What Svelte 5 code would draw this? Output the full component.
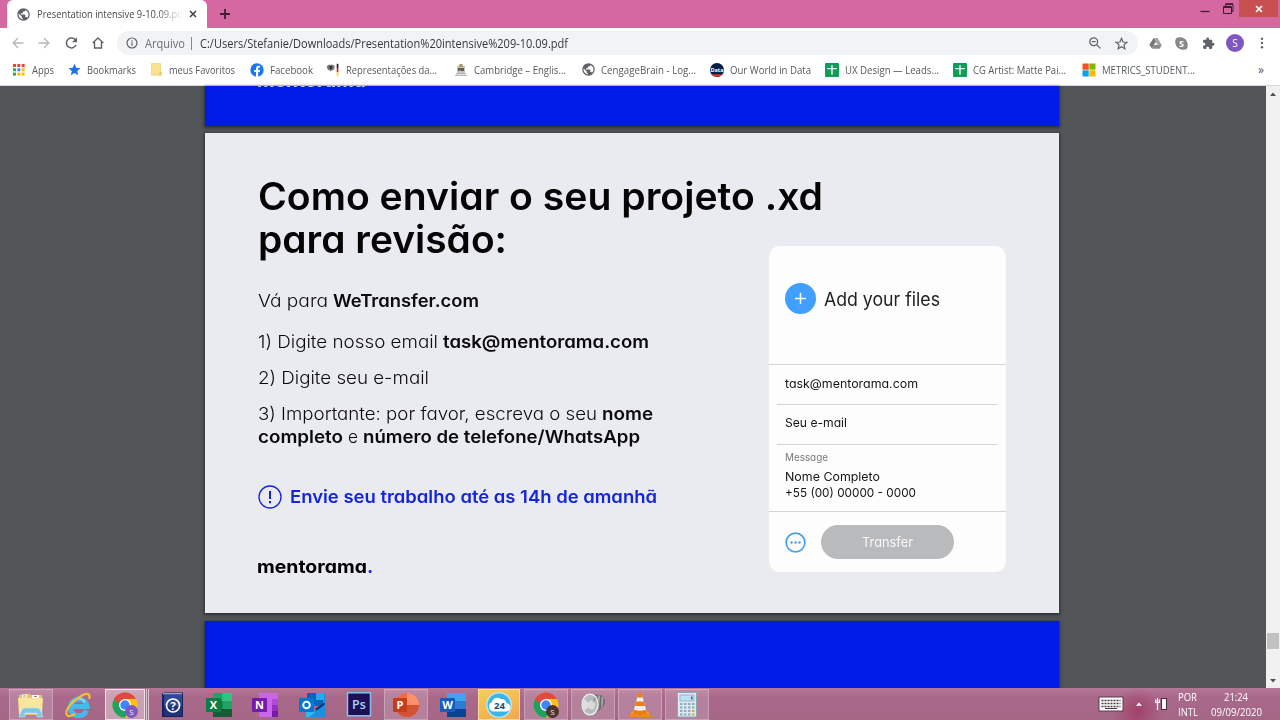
<script>
  // Stretches or narrows a label so that it fills a given width.
  function fit(node, width) {
    node.style.display = 'inline-block';
    const natural = node.getBoundingClientRect().width;
    node.style.width = `${width}px`;
    node.style.transformOrigin = '0 50%';
    node.style.transform = `scaleX(${width / natural})`;
  }

  const bookmarks = [
    { icon: 'apps', label: 'Apps', w: 56, t: 22 },
    { icon: 'star', label: 'Bookmarks', w: 82, t: 49 },
    { icon: 'folder', label: 'meus Favoritos', w: 100, t: 66 },
    { icon: 'facebook', label: 'Facebook', w: 76, t: 43 },
    { icon: 'germany', label: 'Representações da...', w: 128, t: 91 },
    { icon: 'cambridge', label: 'Cambridge – Englis...', w: 128, t: 92 },
    { icon: 'globe', label: 'CengageBrain - Log...', w: 128, t: 95 },
    { icon: 'data', label: 'Our World in Data', w: 115, t: 81 },
    { icon: 'sheet', label: 'UX Design — Leads...', w: 128, t: 94 },
    { icon: 'sheet', label: 'CG Artist: Matte Pai...', w: 128.500, t: 93 },
    { icon: 'microsoft', label: 'METRICS_STUDENT...', w: 130, t: 93 }
  ];

  const tasks = [
    { icon: 'explorer', open: true },
    { icon: 'ie' },
    { icon: 'chrome', open: true, stacked: true, badge: '#7e57c2' },
    { icon: 'help' },
    { icon: 'excel' },
    { icon: 'onenote' },
    { icon: 'outlook' },
    { icon: 'photoshop' },
    { icon: 'powerpoint', open: true },
    { icon: 'word' },
    { icon: 'cloud', open: true, alert: true },
    { icon: 'chrome', open: true, badge: '#4e342e' },
    { icon: 'speaker', open: true },
    { icon: 'vlc', open: true },
    { icon: 'calc', open: true }
  ];
  const appColors = ['#ea4335', '#ea4335', '#ea4335', '#34a853', '#4285f4', '#fbbc04', '#34a853', '#fbbc04', '#fbbc04'];
</script>

{#snippet globe()}
  <svg width="13" height="13" viewBox="1.5 1.5 21 21"><path fill="#5f6368" d="M12 2C6.480 2 2 6.480 2 12s4.480 10 10 10 10-4.480 10-10S17.520 2 12 2zm-1 17.930c-3.950-.49-7-3.850-7-7.930 0-.62.08-1.210.21-1.790L9 15v1c0 1.100.9 2 2 2v1.930zm6.900-2.540c-.26-.81-1-1.390-1.900-1.390h-1v-3c0-.55-.45-1-1-1H8v-2h2c.55 0 1-.45 1-1V7h2c1.100 0 2-.9 2-2v-.41c2.930 1.190 5 4.060 5 7.410 0 2.080-.8 3.970-2.100 5.390z" /></svg>
{/snippet}

{#snippet mark(kind)}
  {#if kind === 'apps'}
    <svg width="14" height="14" viewBox="0 0 14 14">
      {#each appColors as c, i}<rect x={1 + (i % 3) * 4.3} y={1 + Math.floor(i / 3) * 4.3} width="3" height="3" fill={c} />{/each}
    </svg>
  {:else if kind === 'star'}
    <svg width="13" height="13" viewBox="0 0 24 24"><path fill="#1a73e8" d="M12 1.500l3.100 7.300 8 .7-6.100 5.200 1.900 7.800-6.900-4.200-6.900 4.200L7 14.700.9 9.500l8-.7z" /></svg>
  {:else if kind === 'folder'}
    <svg width="13" height="13" viewBox="0 0 13 13"><path fill="#fbe28e" stroke="#f0cd68" stroke-width=".6" d="M1.500.5h9v8.500h.8V12.300H1.500z" /><path fill="#efc95c" d="M9.500 9h1.800v3.300H8.800z" /></svg>
  {:else if kind === 'facebook'}
    <svg width="14" height="14" viewBox="0 0 14 14"><circle cx="7" cy="7" r="6.700" fill="#1877f2" /><path fill="#fff" d="M6 14V8.900H4.200V7H6V5.500C6 3.700 7 2.700 8.700 2.700l1.400.1v1.700h-.9c-.8 0-1 .5-1 1V7h1.900l-.3 1.900H8.200V14z" /></svg>
  {:else if kind === 'germany'}
    <svg width="14" height="14" viewBox="0 0 14 14"><path fill="#777" d="M1.500 2.300L4 1.500l.8.600.8-.6 2.500.8.700 2.200L7.500 7 5.500 7.600l-.7.8-.7-.8L2.100 7 .8 4.500z" /><path fill="#333" d="M3.500 3h2.600v2.500l-1.300 1-1.300-1z" /><path fill="#222" d="M10.700.8h1.700V5h-1.700z" /><path fill="#d22" d="M10.700 5h1.700v4.300h-1.700z" /><path fill="#ffd83a" d="M10.700 9.300h1.700v4h-1.700z" /></svg>
  {:else if kind === 'cambridge'}
    <svg width="14" height="14" viewBox="0 0 14 14"><path fill="#bfc4bd" d="M3 3h8v7H3z" /><path fill="#a99768" d="M5.500 1h3l.5 3H5z" /><path fill="#55604f" d="M4 5h6v3H4z" /><path fill="#d5654d" d="M5 6.500h2v1.500H5z" /><path fill="#b9bbb8" d="M2 10h10v1.500H2zM1 12h12v1H1z" /></svg>
  {:else if kind === 'globe'}
    {@render globe()}
  {:else if kind === 'data'}
    <svg width="14" height="14" viewBox="0 0 14 14"><circle cx="7" cy="7" r="7" fill="#002147" /><path fill="#dc3522" d="M1.400 11.200h11.200A7 7 0 0 1 1.400 11.200z" /><text x="7" y="9" fill="#fff" font-size="5.500" font-weight="700" text-anchor="middle">Data</text></svg>
  {:else if kind === 'sheet'}
    <svg width="14" height="14" viewBox="0 0 14 14"><rect width="14" height="14" rx="1" fill="#0f9d58" /><path stroke="#fff" stroke-width="1.300" d="M7 2.300v9.500M2.300 5.600h9.400" /></svg>
  {:else}
    <svg width="14" height="14" viewBox="0 0 14 14"><path fill="#f25022" d="M.5.500h6.200v6.200H.5z" /><path fill="#7fba00" d="M7.300.500h6.200v6.200H7.300z" /><path fill="#00a4ef" d="M.5 7.300h6.200v6.200H.5z" /><path fill="#ffb900" d="M7.300 7.300h6.200v6.200H7.300z" /></svg>
  {/if}
{/snippet}

{#snippet office(letter, dark, a, b, c)}
  <path fill={a} d="M7 1h19v8H7z" /><path fill={b} d="M7 9h19v8H7z" /><path fill={c} d="M7 17h19v8H7z" />
  {#if letter === 'X'}<path fill="#33c481" d="M16.500 1H26v8h-9.500z" /><path fill="#21a366" d="M16.500 9H26v8h-9.500z" />{/if}
  <rect y="6" width="15" height="14" rx="1" fill={dark} />
  <text x="7.500" y="17" fill="#fff" font-size="11" font-weight="700" text-anchor="middle">{letter}</text>
{/snippet}

{#snippet app(task)}
  <svg width="26" height="26" viewBox="0 0 26 26">
    {#if task.icon === 'explorer'}
      <path fill="#e5c768" d="M1 3l10-1.500 2 1.500h11v20H1z" />
      <path fill="#fff" d="M4 2.500h5v3H4zM14 3h7v3h-7z" /><path fill="#6ca85c" d="M5 3.500h3v1H5z" /><path fill="#d66b52" d="M16 4h3v1h-3z" />
      <path fill="#f9e59b" d="M0 6h25l-1 16H1z" />
      <path fill="#7fc7e4" stroke="#b9e5f2" stroke-width=".7" d="M4 17.500q1-1.500 3-1.500h12q2 0 3 1.500l3 7.500h-6v-4H7v4H1z" />
    {:else if task.icon === 'ie'}
      <path fill="none" stroke="#49b8e9" stroke-width="5" d="M21.500 18.500A8.300 8.300 0 1 1 22 14.500H7" />
      <path fill="none" stroke="#a5e9fb" stroke-width="1.300" d="M6 12a8 8 0 0 1 14-2" />
      <path fill="none" stroke="#f4bd36" stroke-width="2.200" d="M24 7c2-5-2-7-8-3C7 9-1 19 2 23c1 2 5 1 8-1" />
    {:else if task.icon === 'chrome'}
      <circle cx="13" cy="13" r="12.500" fill="#fbc116" />
      <path fill="#dd4b3e" d="M13 13L2.200 6.700A12.500 12.500 0 0 1 23.800 6.700H13z" />
      <path fill="#1da261" d="M13 13l5.500 3.200L13 25.500A12.500 12.500 0 0 1 2.200 6.700z" />
      <path fill="#dd4b3e" d="M13 6.700h10.800A12.500 12.500 0 0 0 2.200 6.700L5 11z" />
      <circle cx="13" cy="13" r="6" fill="#fff" /><circle cx="13" cy="13" r="4.700" fill="#4285f4" />
      <circle cx="19.500" cy="19.500" r="6.500" fill={task.badge} />
      <text x="19.500" y="22.500" fill="#eee" font-size="8" text-anchor="middle">S</text>
    {:else if task.icon === 'help'}
      <path fill="#172357" d="M3 2l2-1.500h19V25H3z" /><path fill="#8ba0d4" d="M4 1h19v1.500H4z" /><path fill="#304898" d="M5 3h18v21H5z" /><path fill="#20327a" d="M5 14h18v10H5z" />
      <circle cx="14" cy="13.500" r="6.500" fill="none" stroke="#fff" stroke-width="1.700" />
      <text x="14" y="17.500" fill="#fff" font-size="11" font-weight="700" text-anchor="middle">?</text>
    {:else if task.icon === 'excel'}
      {@render office('X', '#107c41', '#21a366', '#107c41', '#185c37')}
    {:else if task.icon === 'onenote'}
      {@render office('N', '#7719aa', '#ca64ea', '#ca64ea', '#ca64ea')}
      <path fill="#ae4bd5" d="M20 7h6v6h-6z" /><path fill="#9332bf" d="M20 13h6v6h-6z" /><path fill="#7719aa" d="M20 19h6v6h-6z" />
    {:else if task.icon === 'outlook'}
      <path fill="#1490df" d="M8 1h18v12H8z" /><path fill="#0364b8" d="M8 1h9v7H8z" /><path fill="#28a8ea" d="M17 1h8v7h-8z" /><path fill="#0364b8" d="M15 8h9v6h-9z" />
      <path fill="#35b8f1" d="M7 13l19 12H7z" /><path fill="#1478c8" d="M26 12v13l-11-6z" /><path fill="#0a2767" d="M25 11l1 1-8 6-2-1z" /><path fill="#1a91df" d="M26 13v12H10z" />
      <rect y="6" width="15" height="14" rx="1" fill="#0078d4" /><circle cx="7.500" cy="13" r="3.300" fill="none" stroke="#fff" stroke-width="2" />
    {:else if task.icon === 'photoshop'}
      <rect x="1.500" y=".8" width="23" height="23" fill="#1d1055" stroke="#8bbef0" stroke-width="1.500" />
      <text x="13" y="17" fill="#a8d5ff" font-size="12.500" font-weight="600" text-anchor="middle">Ps</text>
    {:else if task.icon === 'powerpoint'}
      <circle cx="14" cy="13" r="12" fill="#ed6c47" /><path fill="#ff8f6b" d="M14 1a12 12 0 0 1 12 12H14z" /><path fill="#d35230" d="M2 13h24a12 12 0 0 1-24 0z" />
      <rect y="6" width="14" height="14" rx="1" fill="#c43e1c" /><text x="7" y="17" fill="#fff" font-size="11" font-weight="700" text-anchor="middle">P</text>
    {:else if task.icon === 'word'}
      {@render office('W', '#185abd', '#41a5ee', '#2b7cd3', '#103f91')}
    {:else if task.icon === 'cloud'}
      <circle cx="13" cy="13" r="13" fill="#b8e5f6" /><circle cx="13" cy="13" r="11.500" fill="#39b6e8" />
      <path fill="#fff" d="M7 19.500a5 5 0 0 1-1-9.500A5.500 5.500 0 0 1 15 7a5.500 5.500 0 0 1 5.500 4 4.300 4.300 0 0 1 0 8.500z" />
      <text x="13.500" y="16.800" fill="#234d78" font-size="9.500" font-weight="700" text-anchor="middle">24</text>
    {:else if task.icon === 'speaker'}
      <path fill="#6b6b6b" d="M13 2l9 1.500 3 4-1 6-9 9z" /><path fill="#aaa" d="M18 3l2 1-1 12-2 2zM21.500 4l2 2-1 8-1.500 2z" />
      <ellipse cx="10" cy="12.500" rx="9" ry="11.500" fill="#ececec" stroke="#888" stroke-width=".7" /><ellipse cx="10" cy="12.500" rx="7.300" ry="9.700" fill="#b7babb" />
      <path fill="#dedede" d="M4 7l7 6-7 6q-2-6 0-12z" /><ellipse cx="11.500" cy="13" rx="3.500" ry="4.500" fill="#d7d9da" /><path fill="#8f9394" d="M14 4.500l2 3-3 3z" />
    {:else if task.icon === 'vlc'}
      <path fill="#f08a17" d="M4.500 20h17l3 5h-23z" /><path fill="#f7a83d" d="M4.500 20h17l1 1.500H3.500z" /><path fill="#eee" d="M11.500 1h3l5.500 20q-7 4-14 0z" />
      <path fill="#ee7c12" d="M11.500 1q1.500-1.500 3 0l1.200 4.500h-5.400zM9.200 9.500h7.600l1.200 4.500H8zM7 17.500q6 2.500 12 0l1.300 4q-7.300 3-14.600 0z" />
    {:else}
      <rect x="3.500" y=".5" width="19" height="24.500" rx="1" fill="#dce9ef" stroke="#86a9ba" /><path fill="#bde0f3" stroke="#7d9db0" stroke-width=".6" d="M6 3h14v6H6z" /><path fill="#3d6784" d="M17 4.500h1.500v3H17z" />
      {#each [11.5, 15, 18.5, 22] as y}{#each [6, 10, 14, 18] as x}<rect {x} y={y - 0.5} width="2.500" height="2" fill={x === 18 && y > 16 ? '#e0a64e' : '#8eacbd'} />{/each}{/each}
    {/if}
  </svg>
{/snippet}

<div class="screen">
  <header class="tabs">
    <div class="tab">
      {@render globe()}
      <span class="tab-name"><span use:fit={146}>Presentation intensive 9-10.09.pd</span></span>
      <svg width="8" height="8" viewBox="0 0 8 8"><path stroke="#3c4043" stroke-width="1.500" d="M1 1l6 6M7 1L1 7" /></svg>
    </div>
    <svg class="new" width="12" height="12" viewBox="0 0 12 12"><path stroke="#3a2030" stroke-width="1.800" d="M6 1v10M1 6h10" /></svg>
    <div class="window">
      <svg width="10" height="12" viewBox="0 0 10 12"><path stroke="#3a1f30" stroke-width="1.300" d="M.5 10.500h9" /></svg>
      <svg width="11" height="11" viewBox="0 0 11 11"><path fill="none" stroke="#3a1f30" d="M.5 3.500h8v7h-8zM.5 4.500h8M2.500 3V1.500H10v7H8.500M2.500.7H10" /></svg>
      <div class="close"><svg width="8" height="8" viewBox="0 0 8 8"><path stroke="#fff" stroke-width="1.700" d="M1 1l6 6M7 1L1 7" /></svg></div>
    </div>
  </header>

  <nav class="toolbar">
    <div class="nav">
      <svg width="12" height="12" viewBox="0 0 12 12"><path fill="none" stroke="#b4b6b9" stroke-width="1.300" d="M11.500 6H1.500M6 1L1.200 6 6 11" /></svg>
      <svg width="12" height="12" viewBox="0 0 12 12"><path fill="none" stroke="#b4b6b9" stroke-width="1.300" d="M.5 6h10M6 1l4.800 5L6 11" /></svg>
      <svg width="13" height="12" viewBox="0 0 13 12"><path fill="none" stroke="#5f6368" stroke-width="1.500" d="M10.800 3.500A5 5 0 1 0 11 8" /><path fill="#5f6368" d="M12 .3v5H7z" /></svg>
      <svg width="12" height="12" viewBox="0 0 12 12"><path fill="none" stroke="#5f6368" stroke-width="1.400" d="M.7 6L6 1l5.300 5M2.500 5v6h7V5" /></svg>
    </div>
    <div class="address">
      <svg width="12" height="12" viewBox="0 0 12 12"><circle cx="6" cy="6" r="5" fill="none" stroke="#5f6368" stroke-width="1.200" /><path stroke="#5f6368" stroke-width="1.200" d="M6 5.300v3.400M6 3.200v1.200" /></svg>
      <span class="scheme" use:fit={40}>Arquivo</span>
      <i></i>
      <span class="url" use:fit={368}>C:/Users/Stefanie/Downloads/Presentation%20intensive%209-10.09.pdf</span>
      <svg class="zoom" width="12" height="12" viewBox="0 0 12 12"><circle cx="4.700" cy="4.700" r="3.900" fill="none" stroke="#5f6368" stroke-width="1.300" /><path stroke="#5f6368" stroke-width="1.300" d="M2.800 4.700h3.800M7.600 7.600l3.800 3.800" /></svg>
      <svg width="13" height="13" viewBox="0 0 24 24"><path fill="none" stroke="#5f6368" stroke-width="2.200" d="M12 2.500l2.800 6.700 7.200.6-5.500 4.700 1.700 7-6.200-3.700-6.200 3.700 1.700-7L2 9.800l7.200-.6z" /></svg>
    </div>
    <div class="extensions">
      <svg width="13" height="13" viewBox="0 0 13 13"><path fill="#777" d="M4.600 1h2.700L7 4.500 3 11.500.3 7.800z" /><path fill="#a4a4a4" d="M4.600 1h4l4.100 7H8.500z" /><path fill="#8b8b8b" d="M5 8h7.700l-2 3.700H3z" /><path fill="#eee" d="M6.600 5.200L8.200 8H5z" /></svg>
      <svg width="13" height="13" viewBox="0 0 13 13"><rect x=".3" y=".3" width="9" height="9" rx="4" fill="#888" /><rect x="3.700" y="3.700" width="9" height="9" rx="4" fill="#888" /><circle cx="6.500" cy="6.500" r="5.700" fill="#888" /><text x="6.500" y="9.800" fill="#fff" font-size="9" font-weight="700" text-anchor="middle">S</text></svg>
      <svg width="13" height="13" viewBox="0 0 24 24"><path fill="#5f6368" d="M20.500 11H19V7a2 2 0 0 0-2-2h-4V3.500a2.500 2.500 0 0 0-5 0V5H4a2 2 0 0 0-2 2v3.800h1.500a2.700 2.700 0 0 1 0 5.400H2V20a2 2 0 0 0 2 2h3.800v-1.500a2.700 2.700 0 0 1 5.400 0V22H17a2 2 0 0 0 2-2v-4h1.500a2.500 2.500 0 0 0 0-5z" /></svg>
      <b>S</b>
      <svg width="4" height="12" viewBox="0 0 4 12"><g fill="#5f6368"><circle cx="2" cy="1.700" r="1.200" /><circle cx="2" cy="6" r="1.200" /><circle cx="2" cy="10.300" r="1.200" /></g></svg>
    </div>
  </nav>

  <div class="bookmarks">
    {#each bookmarks as b}
      <div class="bookmark" style:width="{b.w}px">{@render mark(b.icon)}<span use:fit={b.t}>{b.label}</span></div>
    {/each}
    <span class="more">»</span>
  </div>

  <main class="viewer">
    <div class="pages">
      <section class="page first"><div class="ghost"><span use:fit={109}>mentorama</span></div></section>
      <section class="page slide">
        <div class="copy">
          <h1><span use:fit={565}>Como enviar o seu projeto .xd</span><br /><span use:fit={249}>para revisão:</span></h1>
          <p class="go"><span use:fit={70}>Vá para</span><b use:fit={146}>WeTransfer.com</b></p>
          <p class="one"><span use:fit={180}>1) Digite nosso email</span><b use:fit={206}>task@mentorama.com</b></p>
          <p class="two"><span use:fit={171}>2) Digite seu e-mail</span></p>
          <p class="three"><span use:fit={339}>3) Importante: por favor, escreva o seu</span><b use:fit={51}>nome</b></p>
          <p><b use:fit={85}>completo</b><span use:fit={10}>e</span><b use:fit={277}>número de telefone/WhatsApp</b></p>
          <p class="deadline">
            <svg width="24" height="24" viewBox="0 0 24 24"><circle cx="12" cy="12" r="11" fill="none" stroke="#1526d8" stroke-width="1.300" /><path stroke="#1526d8" stroke-width="2" d="M12 6v8M12 16v2.200" /></svg>
            <b use:fit={367}>Envie seu trabalho até as 14h de amanhã</b>
          </p>
          <div class="brand"><span use:fit={110}>mentorama</span><em>.</em></div>
        </div>
        <aside class="card">
          <div class="add">
            <svg width="31" height="31" viewBox="0 0 31 31"><circle cx="15.500" cy="15.500" r="15.500" fill="#409fff" /><path stroke="#fff" stroke-width="1.500" d="M15.500 10v11M10 15.500h11" /></svg>
            <span use:fit={116}>Add your files</span>
          </div>
          <div class="field"><span use:fit={133}>task@mentorama.com</span></div>
          <div class="field mail"><span use:fit={62}>Seu e-mail</span></div>
          <div class="message">
            <small><span use:fit={43}>Message</span></small>
            <div><span use:fit={95}>Nome Completo</span></div>
            <div><span use:fit={131}>+55 (00) 00000 - 0000</span></div>
          </div>
          <div class="actions">
            <svg width="21" height="21" viewBox="0 0 21 21"><circle cx="10.500" cy="10.500" r="9.400" fill="none" stroke="#499fef" stroke-width="1.700" /><g fill="#499fef"><circle cx="6.500" cy="10.500" r="1.200" /><circle cx="10.500" cy="10.500" r="1.200" /><circle cx="14.500" cy="10.500" r="1.200" /></g></svg>
            <button><span use:fit={51}>Transfer</span></button>
          </div>
        </aside>
      </section>
      <section class="page last"></section>
    </div>
    <div class="scroll">
      <svg width="6" height="4" viewBox="0 0 6 4"><path fill="#505050" d="M0 4l3-3.500L6 4z" /></svg>
      <div class="thumb"></div>
      <svg width="6" height="4" viewBox="0 0 6 4"><path fill="#505050" d="M0 0l3 3.500L6 0z" /></svg>
    </div>
  </main>

  <footer class="taskbar">
    <div class="tasks">
      {#each tasks as task}
        <div class="slot"><div class="task" class:open={task.open} class:stacked={task.stacked} class:alert={task.alert}>{@render app(task)}</div></div>
      {/each}
    </div>
    <div class="tray">
      <svg width="26" height="16" viewBox="0 0 26 16"><rect x="1" y="1" width="24" height="14" fill="#fff" stroke="#5c3b4e" /><path stroke="#4b3641" stroke-width="1.300" stroke-dasharray="2 1" d="M3.500 4.500h19M3.500 7.500h19M3.500 10.500h19" /><path stroke="#4b3641" d="M7 12.500h12" /></svg>
      <svg width="6" height="4" viewBox="0 0 6 4"><path fill="#fff" d="M0 3.700L3 .5l3 3.200z" /></svg>
      <svg width="13" height="14" viewBox="0 0 13 14"><rect x="6.500" y="1.500" width="5" height="11" fill="#f5eaf0" stroke="#4b2d3d" /><rect x="7.500" y="2.500" width="3" height="9" fill="#fff" /><path stroke="#fff" stroke-width="1.200" d="M2.500 1v12M.7 2.500v3h3.600v-3" fill="none" /></svg>
      <div class="lang"><span use:fit={19}>POR</span><span use:fit={20}>INTL</span></div>
      <div class="clock"><span use:fit={24}>21:24</span><span use:fit={51}>09/09/2020</span></div>
    </div>
  </footer>
</div>

<style>
  :global(body) { margin: 0; overflow: hidden; }
  .screen { width: 1280px; height: 720px; display: flex; flex-direction: column; overflow: hidden; font-family: "Open Sans", "Noto Sans", sans-serif; background: #fff; }
  span, b { white-space: nowrap; }
  svg { display: block; flex: none; }

  .tabs { height: 28px; flex: none; background: #d568a1; display: flex; }
  .tab { box-sizing: border-box; width: 200px; margin-left: 7px; padding-left: 10px; background: #fff; border-radius: 6px 6px 0 0; display: flex; align-items: center; }
  .tab-name { width: 146px; margin: 0 6px 0 7px; overflow: hidden; font-size: 10.500px; color: #45494d; mask-image: linear-gradient(90deg, #000 120px, transparent 146px); }
  .new { margin: 8px 0 0 12px; }
  .window { margin-left: auto; padding-right: 2px; display: flex; align-items: flex-start; }
  .window > svg:first-child { margin: 1px 13px 0 0; }
  .window > svg:nth-child(2) { margin: 3px 5px 0 0; }
  .close { width: 39px; height: 17px; background: #c75050; display: grid; place-items: center; }

  .toolbar { height: 30px; flex: none; display: flex; align-items: center; }
  .nav { width: 92px; margin-left: 12px; display: flex; justify-content: space-between; }
  .address { box-sizing: border-box; width: 1021px; height: 24px; margin-left: 13px; padding: 0 10px 0 9px; border-radius: 12px; background: #f1f3f4; display: flex; align-items: center; font-size: 11.800px; }
  .scheme { flex: none; margin-left: 7px; color: #6b6f73; }
  .address i { width: 1px; height: 13px; margin: 0 8px 0 6px; background: #85898d; }
  .url { flex: none; color: #35383b; }
  .zoom { margin: 0 14px 0 auto; }
  .extensions { flex: 1; padding-left: 10.500px; display: flex; align-items: center; gap: 13.500px; }
  .extensions b { width: 18px; height: 18px; margin: 0 2px 0 -2px; border-radius: 50%; background: #7e57c2; color: #fff; font-size: 10px; font-weight: 400; line-height: 18px; text-align: center; }

  .bookmarks { box-sizing: border-box; height: 28px; flex: none; padding: 0 16px 4px 12px; border-bottom: 1px solid #d5d7da; display: flex; align-items: center; font-size: 10.500px; color: #55595d; }
  .bookmark { flex: none; display: flex; align-items: center; gap: 6px; }
  .more { margin-left: auto; font-size: 12px; }

  .viewer { height: 602px; flex: none; background: #525659; display: flex; justify-content: space-between; }
  .pages { width: 854px; margin-left: 205px; display: flex; flex-direction: column; gap: 7px; }
  .page { box-sizing: border-box; flex: none; box-shadow: 0 1px 3px 1px rgba(0, 0, 0, .45); }
  .first { height: 40px; background: #001ae8; overflow: hidden; }
  .ghost { margin: -15px 0 0 52px; font: 700 18px/20px Inter, sans-serif; font-feature-settings: "cv11"; color: #c5ccff; }
  .last { height: 67.500px; margin-top: .5px; background: #001ae8; }
  .slide { height: 480px; padding: 42px 53px 0 53px; background: #eaebf0; display: flex; justify-content: space-between; font-family: Inter, "Open Sans", sans-serif; font-feature-settings: "cv11"; color: #0b0b0d; }
  .copy { width: 480px; }
  h1 { margin: 0; font-size: 38.500px; font-weight: 580; line-height: 43px; white-space: nowrap; color: #050505; }
  p { margin: 0; height: 23px; display: flex; gap: 5px; font-size: 17.800px; line-height: 23px; font-weight: 300; }
  p b { font-weight: 600; }
  .go { margin-top: 28px; }
  .one { margin-top: 18px; }
  .two { margin-top: 13px; }
  .three { margin-top: 13px; }
  .deadline { margin-top: 37px; align-items: center; gap: 8px; color: #1526d8; }
  .deadline b { font-weight: 570; }
  .brand { margin-top: 47.500px; margin-left: -1px; font-size: 18px; font-weight: 750; line-height: 21px; display: flex; color: #000; }
  .brand em { font-style: normal; color: #0a28ee; }

  .card { box-sizing: border-box; width: 237px; height: 326px; margin-top: 71px; border-radius: 11px; background: #fdfdfd; color: #151515; font-size: 12px; }
  .add { box-sizing: border-box; height: 119px; padding: 0 0 13px 16px; border-bottom: 1px solid #d3d4d6; display: flex; align-items: center; gap: 8px; font-size: 18.500px; font-feature-settings: normal; color: #222; }
  .field { box-sizing: border-box; height: 40px; margin: 0 8px; padding: 10px 8px 0; border-bottom: 1px solid #d3d4d6; line-height: 18px; }
  .mail { padding-top: 9px; }
  .message { box-sizing: border-box; height: 67px; padding: 5px 0 0 16px; border-bottom: 1px solid #d3d4d6; line-height: 16px; }
  .message small { display: block; height: 19px; font-size: 10.500px; color: #77797b; }
  .actions { height: 60px; padding-left: 16px; display: flex; align-items: center; gap: 15px; }
  button { width: 133px; height: 34px; border: 0; border-radius: 17px; padding: 0; background: #b9babc; color: #f8f8f8; font: 400 13.500px Inter, sans-serif; font-feature-settings: "cv11"; }
  .scroll { width: 14px; background: #f1f1f1; display: flex; flex-direction: column; align-items: center; padding: 6px 0 5px; box-sizing: border-box; }
  .thumb { width: 12px; height: 16px; margin: auto 0 30px; background: #c1c1c1; }

  .taskbar { height: 32px; flex: none; background: linear-gradient(#b57696, #a8688a 30%, #a56786); display: flex; justify-content: space-between; }
  .tasks { padding-left: 8px; display: flex; }
  .slot { width: 46.800px; display: flex; justify-content: center; }
  .task { box-sizing: border-box; width: 44px; height: 31px; margin-top: 1px; border: 1px solid transparent; display: grid; place-items: center; }
  .task.open { background: rgba(255, 255, 255, .17); border-color: rgba(255, 255, 255, .25); }
  .task.stacked { width: 40px; background: rgba(255, 255, 255, .38); border-color: rgba(255, 255, 255, .7); box-shadow: 1px 0 0 #a8688a, 2px 0 0 #e0c4d1, 3px 0 0 #a8688a, 4px 0 0 #e0c4d1; }
  .task.alert { width: 42px; background: linear-gradient(160deg, #f3cf57, #f5a64d); border-color: #f8df9e; }
  .tray { width: 182px; display: flex; align-items: center; color: #fff; font-size: 10px; background: radial-gradient(ellipse 25px 24px at 40px 24px, #a24269, transparent); }
  .tray > svg:nth-child(2) { margin-left: 12px; }
  .tray > svg:nth-child(3) { margin-left: 13px; }
  .lang, .clock { display: flex; flex-direction: column; line-height: 14.500px; padding-top: 1px; }
  .lang { margin-left: 10px; width: 24px; align-items: flex-start; }
  .clock { width: 66px; margin-left: 1px; align-items: center; }
</style>
